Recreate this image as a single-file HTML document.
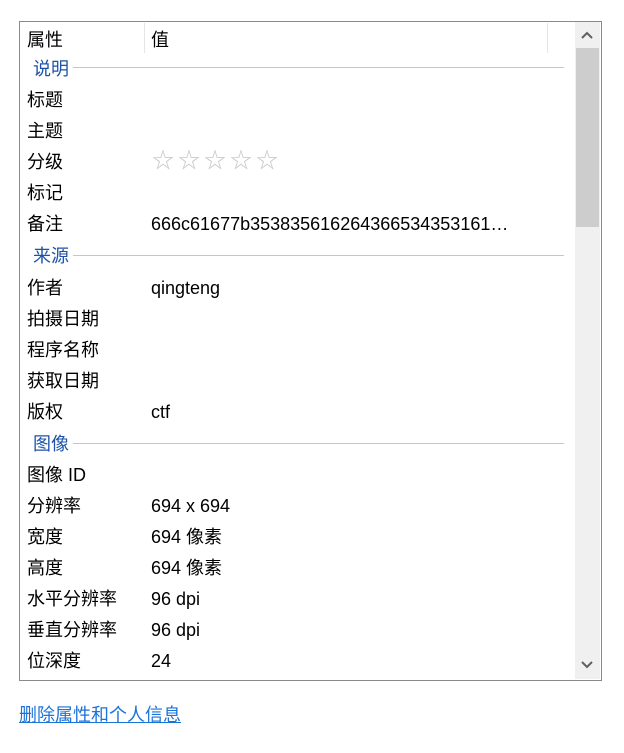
<!DOCTYPE html>
<html><head><meta charset="utf-8"><style>
body{margin:0;width:624px;height:753px;background:#fff;font-family:"Liberation Sans","Noto Sans CJK SC",sans-serif;font-size:18px;color:#000;position:relative;overflow:hidden}
.box{position:absolute;left:19px;top:21px;width:581px;height:658px;border:1px solid #8a8a8a}
.t{position:absolute;line-height:20px;white-space:nowrap}
.g{position:absolute;left:33px;color:#1d52a8;line-height:20px}
.ln{position:absolute;height:1px;background:#bcc6dc}
.sb{position:absolute;left:575px;top:22px;width:25px;height:657px;background:#f0f0f0}
.th{position:absolute;left:576px;top:48px;width:23px;height:179px;background:#cdcdcd}
a{position:absolute;left:19px;top:705px;color:#1a73d9;text-decoration:underline;line-height:20px}
.star{color:#c8c8c8;font-size:22px}
</style></head><body>
<div class="box"></div>
<div style="position:absolute;left:144px;top:23px;width:1px;height:30px;background:#e5e5e5"></div>
<div style="position:absolute;left:547px;top:23px;width:1px;height:30px;background:#e5e5e5"></div>
<div class="sb"></div><div class="th"></div>
<svg style="position:absolute;left:580px;top:30px" width="14" height="10"><path d="M2 8 L7 3 L12 8" stroke="#606060" stroke-width="2" fill="none"/></svg>
<svg style="position:absolute;left:580px;top:660px" width="14" height="10"><path d="M2 2 L7 7 L12 2" stroke="#606060" stroke-width="2" fill="none"/></svg>

<div class="t" style="left:27px;top:30px">属性</div><div class="t" style="left:151px;top:30px">值</div>
<div class="g" style="top:59px">说明</div><div class="ln" style="left:73px;top:67px;width:491px"></div>
<div class="t" style="left:27px;top:90px">标题</div>
<div class="t" style="left:27px;top:121px">主题</div>
<div class="t" style="left:27px;top:152px">分级</div>
<div class="t star" style="left:152px;top:151px;letter-spacing:4px">☆☆☆☆☆</div>
<div class="t" style="left:27px;top:183px">标记</div>
<div class="t" style="left:27px;top:214px">备注</div><div class="t" style="left:151px;top:214px">666c61677b353835616264366534353161…</div>
<div class="g" style="top:246px">来源</div><div class="ln" style="left:73px;top:255px;width:491px"></div>
<div class="t" style="left:27px;top:278px">作者</div><div class="t" style="left:151px;top:278px">qingteng</div>
<div class="t" style="left:27px;top:309px">拍摄日期</div>
<div class="t" style="left:27px;top:340px">程序名称</div>
<div class="t" style="left:27px;top:371px">获取日期</div>
<div class="t" style="left:27px;top:402px">版权</div><div class="t" style="left:151px;top:402px">ctf</div>
<div class="g" style="top:434px">图像</div><div class="ln" style="left:73px;top:443px;width:491px"></div>
<div class="t" style="left:27px;top:465px">图像 ID</div>
<div class="t" style="left:27px;top:496px">分辨率</div><div class="t" style="left:151px;top:496px">694 x 694</div>
<div class="t" style="left:27px;top:527px">宽度</div><div class="t" style="left:151px;top:527px">694 像素</div>
<div class="t" style="left:27px;top:558px">高度</div><div class="t" style="left:151px;top:558px">694 像素</div>
<div class="t" style="left:27px;top:589px">水平分辨率</div><div class="t" style="left:151px;top:589px">96 dpi</div>
<div class="t" style="left:27px;top:620px">垂直分辨率</div><div class="t" style="left:151px;top:620px">96 dpi</div>
<div class="t" style="left:27px;top:651px">位深度</div><div class="t" style="left:151px;top:651px">24</div>
<a>删除属性和个人信息</a>
</body></html>
